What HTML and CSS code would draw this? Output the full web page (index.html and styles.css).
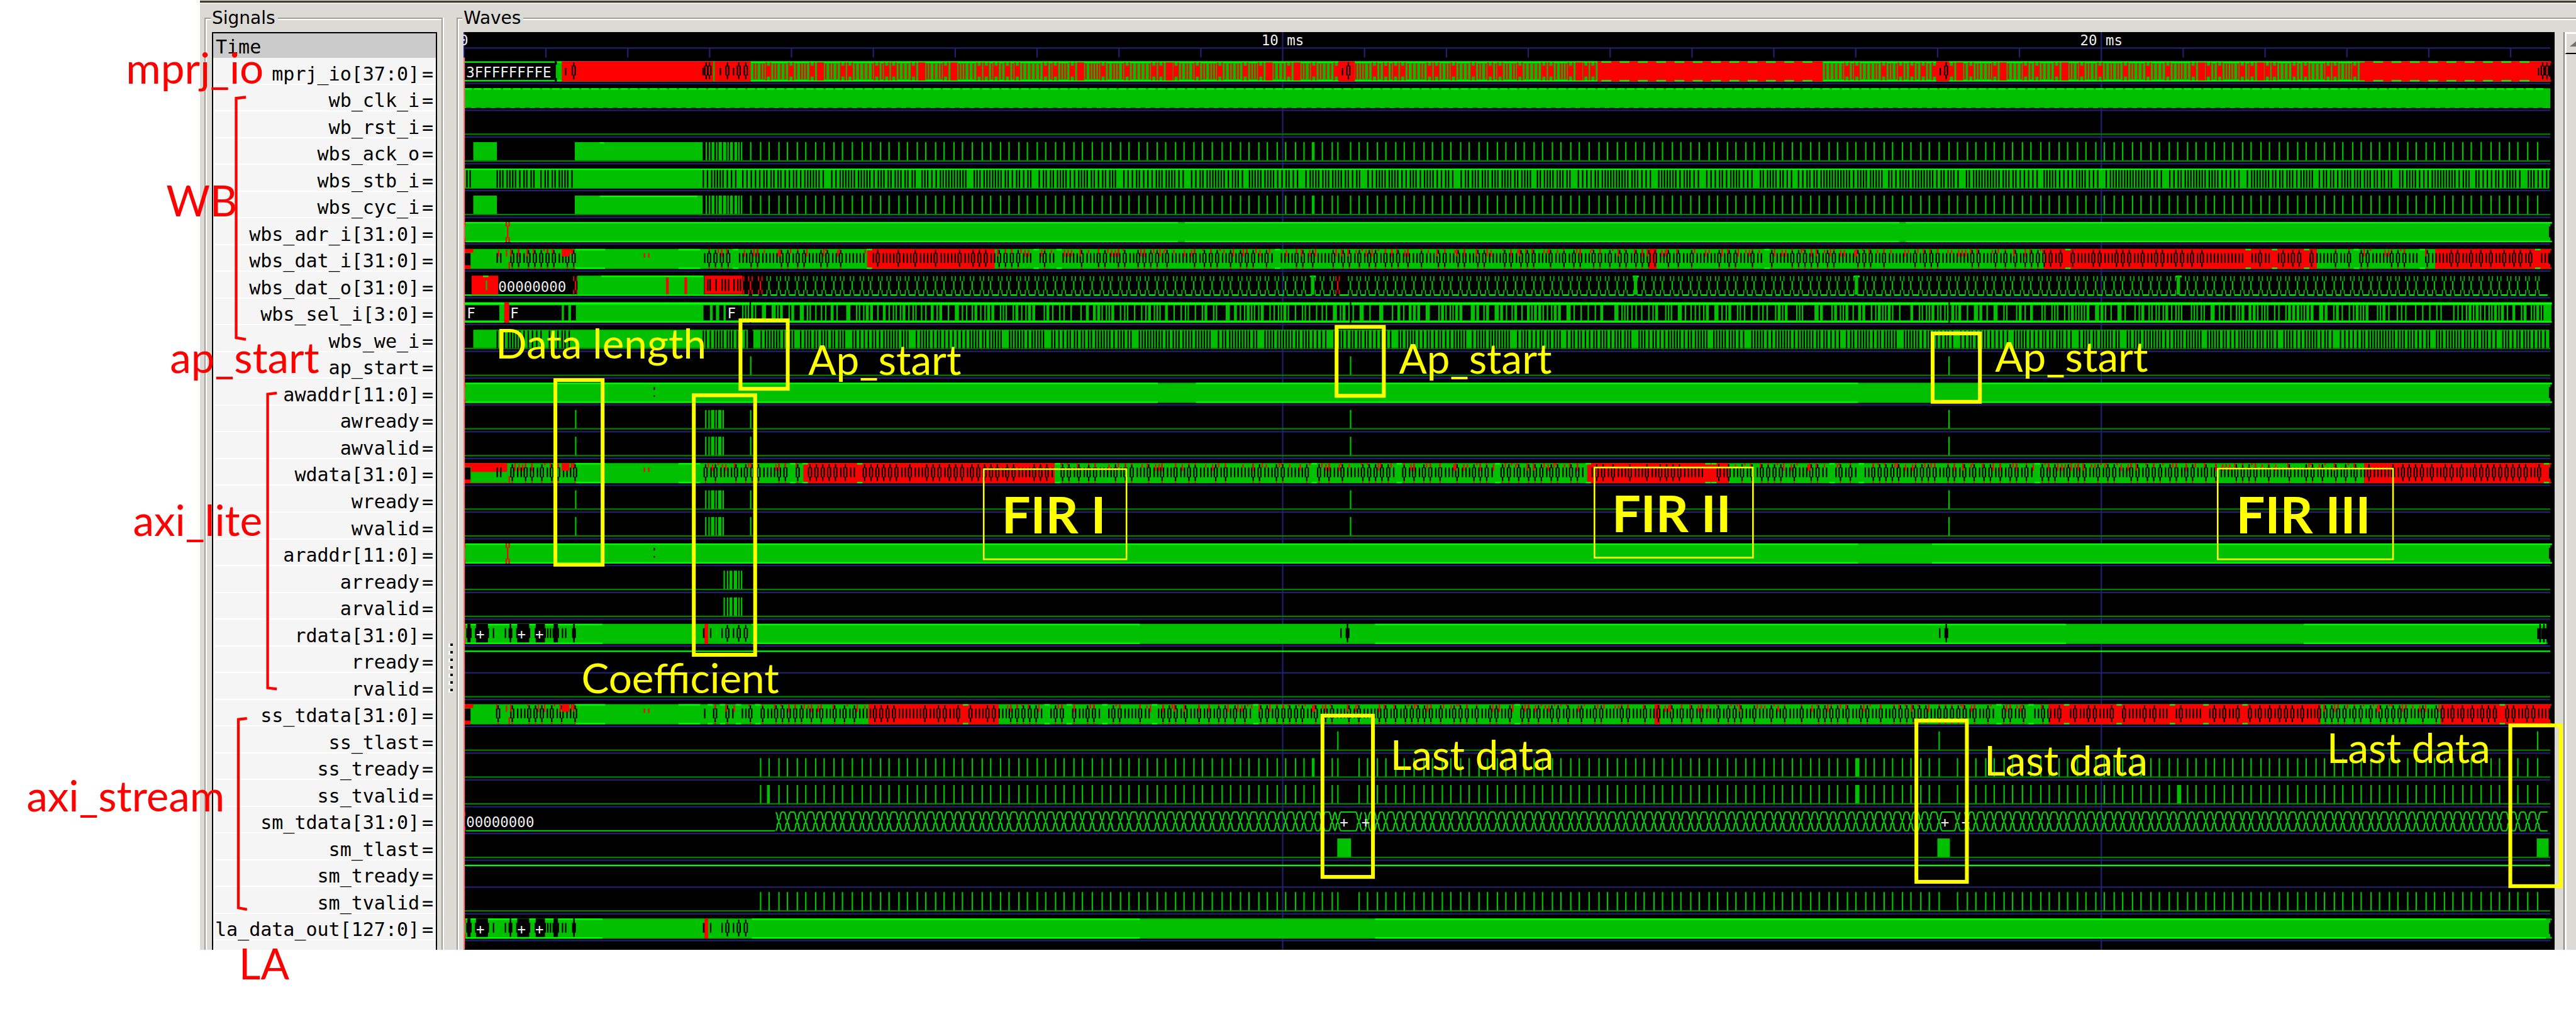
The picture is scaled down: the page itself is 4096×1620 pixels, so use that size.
FILE: index.html
```html
<!DOCTYPE html>
<html lang="en">
<head>
<meta charset="utf-8">
<title>FIR waveform</title>
<link rel="stylesheet" href="styles.css">
</head>
<body>
<main class="figure">
  <div class="viewer">
    <div class="edge"></div>
    <div class="panes">
      <fieldset class="frame signals">
        <legend>Signals</legend>
        <ul class="list">
          <li class="time">Time</li>
          <li>mprj_io[37:0]<i>=</i></li>
          <li>wb_clk_i<i>=</i></li>
          <li>wb_rst_i<i>=</i></li>
          <li>wbs_ack_o<i>=</i></li>
          <li>wbs_stb_i<i>=</i></li>
          <li>wbs_cyc_i<i>=</i></li>
          <li>wbs_adr_i[31:0]<i>=</i></li>
          <li>wbs_dat_i[31:0]<i>=</i></li>
          <li>wbs_dat_o[31:0]<i>=</i></li>
          <li>wbs_sel_i[3:0]<i>=</i></li>
          <li>wbs_we_i<i>=</i></li>
          <li>ap_start<i>=</i></li>
          <li>awaddr[11:0]<i>=</i></li>
          <li>awready<i>=</i></li>
          <li>awvalid<i>=</i></li>
          <li>wdata[31:0]<i>=</i></li>
          <li>wready<i>=</i></li>
          <li>wvalid<i>=</i></li>
          <li>araddr[11:0]<i>=</i></li>
          <li>arready<i>=</i></li>
          <li>arvalid<i>=</i></li>
          <li>rdata[31:0]<i>=</i></li>
          <li>rready<i>=</i></li>
          <li>rvalid<i>=</i></li>
          <li>ss_tdata[31:0]<i>=</i></li>
          <li>ss_tlast<i>=</i></li>
          <li>ss_tready<i>=</i></li>
          <li>ss_tvalid<i>=</i></li>
          <li>sm_tdata[31:0]<i>=</i></li>
          <li>sm_tlast<i>=</i></li>
          <li>sm_tready<i>=</i></li>
          <li>sm_tvalid<i>=</i></li>
          <li>la_data_out[127:0]<i>=</i></li>
        </ul>
      </fieldset>
      <div class="handle"><b></b><b></b><b></b><b></b><b></b><b></b><b></b></div>
      <fieldset class="frame waves">
        <legend>Waves</legend>
        <svg class="plot" viewBox="854 60 3852 1690" role="img" aria-label="Waveforms">
          <g id="grid"></g>
          <g id="traces"></g>
          <g class="value">
            <text x="855" y="84" text-anchor="middle">0</text>
            <text x="2363" y="84" text-anchor="middle">10 ms</text>
            <text x="3871" y="84" text-anchor="middle">20 ms</text>
            <text x="859" y="143">3FFFFFFFFE</text>
            <text x="918" y="538">00000000</text>
            <text x="860" y="587">F</text>
            <text x="940" y="587">F</text>
            <text x="1340" y="587">F</text>
            <text x="859" y="1524">00000000</text>
            <text x="885" y="1178" text-anchor="middle">+</text>
            <text x="961" y="1178" text-anchor="middle">+</text>
            <text x="994" y="1178" text-anchor="middle">+</text>
            <text x="2476" y="1524" text-anchor="middle">+</text>
            <text x="2516" y="1524" text-anchor="middle">+</text>
            <text x="3583" y="1524" text-anchor="middle">+</text>
            <text x="3621" y="1524" text-anchor="middle">+</text>
            <text x="885" y="1721" text-anchor="middle">+</text>
            <text x="961" y="1721" text-anchor="middle">+</text>
            <text x="994" y="1721" text-anchor="middle">+</text>
          </g>
        </svg>
        <div class="scroll">
          <button class="up" type="button" aria-label="Scroll up"><svg viewBox="0 0 24 10"><path d="M0 10L12 0L24 10z"/></svg></button>
        </div>
      </fieldset>
    </div>
  </div>
  <svg class="notes" viewBox="0 0 4745 1877">
    <g class="brace">
      <path d="M453 179L435 181V622L453 625"/>
      <path d="M510 724L493 726V1267L510 1269"/>
      <path d="M455 1323L439 1325V1672L455 1675"/>
    </g>
    <g class="group">
      <text x="232" y="154">mprj_io</text>
      <text x="306" y="398">WB</text>
      <text x="313" y="687">ap_start</text>
      <text x="245" y="987">axi_lite</text>
      <text x="49" y="1494">axi_stream</text>
      <text x="440" y="1804">LA</text>
    </g>
    <g class="mark">
      <rect x="1023" y="700" width="87" height="340"/>
      <rect x="1278" y="728" width="113" height="478"/>
      <rect x="1364" y="590" width="87" height="126"/>
      <rect x="2462" y="602" width="87" height="127"/>
      <rect x="3560" y="614" width="87" height="126"/>
      <rect x="2436" y="1318" width="93" height="297"/>
      <rect x="3530" y="1327" width="93" height="297"/>
      <rect x="4624" y="1336" width="93" height="296"/>
    </g>
    <g class="box">
      <rect x="1812" y="864" width="263" height="166"/>
      <rect x="2937" y="861" width="292" height="166"/>
      <rect x="4085" y="863" width="323" height="167"/>
    </g>
    <g class="note">
      <text x="913" y="660">Data length</text>
      <text x="1489" y="691">Ap_start</text>
      <text x="2577" y="688">Ap_start</text>
      <text x="3675" y="685">Ap_start</text>
      <text x="1071" y="1277">Coefficient</text>
      <text x="2561" y="1418">Last data</text>
      <text x="3655" y="1428">Last data</text>
      <text x="4286" y="1405">Last data</text>
    </g>
    <g class="fir">
      <text x="1845" y="982">FIR I</text>
      <text x="2969" y="980">FIR II</text>
      <text x="4119" y="982">FIR III</text>
    </g>
  </svg>
</main>
<script src="waves.js"></script>
</body>
</html>
```
FILE: styles.css
```css
* { box-sizing: border-box; }

body {
  margin: 0;
  background: #fff;
  color: #000;
  overflow-x: hidden;
}

.figure {
  position: relative;
  padding: 0 0 109px 318px;
}

.viewer {
  background: #dcdad5;
  overflow: hidden;
}

.edge {
  height: 6px;
  margin-bottom: 6px;
  background: #151713;
  border-top: 2px solid #a5a295;
  border-bottom: 2px solid #edebe6;
}

.panes { display: flex; padding-left: 7px; }

.frame {
  display: flex;
  min-width: 0;
  margin: 0;
  padding: 5px 7px 0 10px;
  border: 2px solid #a39f96;
  border-bottom: 0;
  box-shadow: inset 2px 2px #fff, 2px 0 #fff;
}

.frame legend {
  padding: 0 4px 0 2px;
  margin-left: -2px;
  background: #dcdad5;
  font: 28px/34px "DejaVu Sans", sans-serif;
}

.signals { flex: none; width: 379px; }
.waves { flex: 1; padding: 5px 0 0 9px; border-right: 0; }

.list {
  flex: 1;
  display: grid;
  grid-template-rows: 136fr repeat(33, 148fr) 50fr;
  margin: 0;
  padding: 0;
  list-style: none;
  border: 2px solid #000;
  border-bottom: 0;
  background: #f5f5f5;
  font: 30px/30px "DejaVu Sans Mono", monospace;
}

.list li {
  display: flex;
  align-items: flex-end;
  justify-content: flex-end;
  min-height: 0;
  padding-right: 4px;
  border-bottom: 2px solid #fff;
  border-left: 3px solid #fafafa;
  white-space: nowrap;
}

.list i { font-style: normal; margin-left: 4px; }

.list .time {
  justify-content: flex-start;
  padding-left: 1px;
  border-color: #cbcbcb;
  background: #cbcbcb;
}

.handle {
  flex: none;
  width: 22px;
  padding: 1011px 0 0 9px;
  display: flex;
  flex-direction: column;
  gap: 6px;
}

.handle b {
  width: 7px;
  height: 6px;
  background: #111;
  border-left: 3px solid #fff;
  border-bottom: 2px solid #fff;
}

.plot {
  flex: 1;
  min-width: 0;
  height: auto;
  display: block;
  background: #000;
}

.value {
  fill: #f0f0f0;
  font: 26px "DejaVu Sans Mono", monospace;
}

.scroll {
  flex: none;
  width: 20px;
  margin-left: 14px;
  border-left: 2px solid #88857d;
  box-shadow: inset 3px 0 #fff;
}

.up {
  display: block;
  width: 18px;
  height: 35px;
  padding: 0 0 0 5px;
  overflow: hidden;
  background: #dcdad5;
  border: solid;
  border-width: 3px 0 2px 3px;
  border-color: #fff #fff #000 #fff;
}

.up svg { display: block; width: 24px; height: 10px; fill: #75736e; }

.notes {
  position: absolute;
  left: 0;
  top: 0;
  width: 100%;
  pointer-events: none;
  font-family: Lato, sans-serif;
}

.brace { fill: none; stroke: #f00; stroke-width: 5; }
.group { fill: #f00; font-size: 78px; }
.mark { fill: none; stroke: #ff0; stroke-width: 7; }
.box { fill: none; stroke: #ff0; stroke-width: 3; }
.note { fill: #ff0; font-size: 76px; }
.fir { fill: #ff0; font-size: 94px; font-weight: 700; }
```
FILE: waves.js
```js
(() => {
const NS = "http://www.w3.org/2000/svg";
const COLORS = { g: "#00c000", hi: "#00ff00", lo: "#008000", k: "#000", r: "#ff0000", b: "#20206e", p: "#ff7070" };
const X0 = 855, X1 = 4698, PX = 2.6;
const bottom = k => 105.33 + 49.333 * k;
const snap = x => X0 + Math.round((x - X0) / PX) * PX;

let seed = 7;
const rnd = () => (seed = (seed * 16807) % 2147483647) / 2147483647;
const pick = a => a[Math.floor(rnd() * a.length)];

// Rectangles are gathered by layer, a colour key with an optional digit.
let layers = new Map();
const rect = (key, x, y, w, h) => {
  const n = v => Math.round(v * 10) / 10;
  layers.set(key, (layers.get(key) || "") + `M${n(x)} ${n(y)}h${n(w)}v${n(h)}h${n(-w)}z`);
};
function flush(id) {
  const g = document.getElementById(id);
  const order = [...layers].sort((a, b) => (+a[0].slice(-1) || 0) - (+b[0].slice(-1) || 0));
  for (const [key, d] of order) {
    const p = document.createElementNS(NS, "path");
    p.setAttribute("d", d);
    p.setAttribute("fill", COLORS[key.replace(/\d/, "")]);
    g.append(p);
  }
  layers = new Map();
}
const top = k => bottom(k) - 40.7;
const H = 37;

// Ruler and grid
for (let i = 0; i <= 25; i++) {
  const x = X0 + 150.8 * i;
  if (i % 10 === 0) rect("b", x - 1.3, 60, PX, 1690);
  else rect("b", x - 1.3, 89, PX, 18);
}
rect("b", X0, 88, X1 - X0, PX);
for (let k = 1; k <= 33; k++) rect("b", X0, bottom(k) - 1.3, X1 - X0, PX);
flush("grid");

// Pulse positions of the three filter runs
const run = (a, b) => Array.from({ length: 63 }, (_, i) => a + (b - a) * i / 62);
const pulses = [...run(1400, 2454), 2464.5, ...run(2503, 3555), 3570.7, ...run(3606, 4655), 4674];
const starts = [1382, 2487.7, 3590.5];

const low = k => rect("lo", X0, bottom(k) - 6.6, X1 - X0, PX);
const high = k => rect("hi", X0, bottom(k) - 41, X1 - X0, PX);
const pulse = (k, x, w = PX) => rect("g", snap(x) - 1, bottom(k) - 40, w, 34);
const solid = (k, a, b, key = "g") => rect(key, a, top(k), b - a, H);
function rails(k, a, b, gaps = []) {
  let x = a;
  for (const [s, e] of [...gaps, [b, b]]) {
    rect("hi3", x, top(k), s - x, PX);
    rect("hi3", x, top(k) + H - PX, s - x, PX);
    x = e;
  }
}
const mid = (k, x, key = "k4") => rect(key, x, top(k) + 8, PX, 18);
function oval(k, x, key = "k4") {
  rect(key, x - 3.9, top(k) + 8, PX, 18);
  rect(key, x + 1.3, top(k) + 8, PX, 18);
  rect(key, x - 1.3, top(k) + 2, PX, 7);
  rect(key, x - 1.3, top(k) + 25, PX, 8);
}
const notch = k => {
  rect("k7", 4695.5, top(k) + 8, 8, 20);
  rect("k7", 4698, top(k) + 3, 6, 31);
};

// Bands of a bus whose value never holds still
function busy(k, reds) {
  solid(k, X0, 4700);
  rails(k, 1060, 1115, []); rails(k, 1250, 1290, []);
  for (const [a, b] of reds) solid(k, a, b, "r1");
  rect("k4", X0, top(k) + 8, 12, 24);
  rect("r5", X0, top(k), 17, 7); rect("r5", X0, top(k) + 30, 12, 7);
  const spans = [[915, 924], [941, 1060], [1296, 4696]];
  for (const [a, b] of spans) {
    let x = snap(a);
    while (x < b) {
      const red = reds.some(([s, e]) => x >= s && x < e);
      const t = rnd();
      if (t < .45) {
        oval(k, x + 3);
        if (!red) {
          rect("r5", x + 1.7, top(k) + H - 3, PX, 3);
          rect("r5", x + 1.7 + pick([-2.6, 0, 5.2]), top(k), PX, pick([4, 8, 14]));
        }
        x += 11.7;
      } else if (t < .96) {
        mid(k, x);
        if (!red && rnd() < .35) rect("r5", x + 2.6, top(k) + 2, PX, pick([6, 12]));
        x += 6.5;
      } else {
        rect("hi3", x, top(k), 10, PX); rect("hi3", x, top(k) + H - PX, 10, PX);
        x += 11;
      }
    }
  }
  rect("r5", 1035, top(k), 14, 14); rect("r5", 1052, top(k), PX, 10);
  rect("r5", 1186, top(k) + 8, PX, 8); rect("r5", 1194, top(k) + 8, PX, 8);
  rect("r5", 932, top(k) + 2, PX, 12); rect("r5", 937, top(k) + 24, PX, 12);
  notch(k);
}

// Black stripes over a green band
function stripes(k, a, b) {
  let x = snap(a), wide = 40 + rnd() * 90;
  while (x < b) {
    rect("k2", x, top(k) + 2.4, PX, 33);
    const w = pick([2.6, 2.6, 2.6, 5.2, 5.2]);
    x += PX + w; wide -= PX + w;
    if (wide < 0) { x += 7.8; wide = 60 + rnd() * 110; }
  }
}

// 1: mprj_io
{
  const k = 1, t = top(k);
  solid(k, 1024, X1);
  rails(k, X0, X1);
  rect("g4", 1026, t + 6, PX, 25);
  rect("k5", 1022, t, 4, 6); rect("k5", 1022, t + 31, 4, 6);
  for (const [a, b] of [[1035, 1383], [2466, 2496], [2943, 3358], [3567, 3590], [4356, 4700]]) rect("r4", a, t, b - a, H);
  let x = snap(1388), block = 4;
  while (x < 4352) {
    const solidRed = (x > 2460 && x < 2496) || (x > 2938 && x < 3358) || (x > 3562 && x < 3590);
    if (!solidRed) {
      if (block-- <= 0) {
        rect("r4", x, t + 8, 9, 20);
        rect("r4", x - 1, t + 2, PX, 33); rect("r4", x + 7, t + 2, PX, 33);
        x += 13; block = pick([0, 1, 3, 4, 5]);
        if (rnd() < .12) { rect("r4", x, t + 2, 13, 33); x += 15; }
        continue;
      }
      rect("r4", x, t + 4, PX, 29);
    }
    x += pick([5.2, 7.8]);
  }
  for (const [a, b] of [[2950, 3340], [4372, 4670]])
    for (let d = a; d < b; d += 33.7) { rect("hi6", d, t, 18, PX); rect("hi6", d, t + H - PX, 18, PX); }
  for (const m of [1041, 1294, 1326, 1350, 2472, 3573, 4675]) rect("k6", m, t + 12, PX, 14);
  for (const m of [1057, 1301, 1307, 1340, 1361, 1374, 2484, 3585, 4684, 4692]) oval(k, m, "k6");
  rect("g6", 1314, t, PX, H);
  notch(k);
  flush("traces");
}

// 2: clock
solid(2, X0, X1);
for (let x = X0; x < X1 - 14; x += 18) rect("hi", x, top(2), 14, PX);
for (let x = X0 + 4; x < X1 - 10; x += 18) rect("lo", x, top(2) + H - 2, 9, 2);
low(3);

// 4, 6: acknowledge and cycle
for (const k of [4, 6]) {
  low(k);
  rect("g", 872, bottom(k) - 40, 43.5, 34);
  rect("g", 1059, bottom(k) - 40, 235.5, 34);
  rect("hi2", 1105, bottom(k) - 40, k === 6 ? 180 : 8, PX);
  for (const [x, w] of [[1300, 2.6], [1306, 2.6], [1311, 5.2], [1319, 2.6], [1324, 6], [1332, 6], [1340, 2.6], [1345, 5.2], [1353, 5.2], [1360, 2.6], [1365, 2.6]]) rect("g", x, bottom(k) - 40, w, 34);
  for (const x of [...starts, ...pulses]) pulse(k, x);
  pulse(k, 2417, 5.2);
}
flush("traces");

// 5, 11: strobe and write enable
{
  solid(5, X0, 4696);
  rect("k2", 859, top(5) + 2, PX, 33); rect("k2", 865, top(5) + 2, PX, 33);
  stripes(5, 916, 1058); stripes(5, 1295, 4694);
  rect("hi3", X0, top(5), X1 - X0, PX);
  rect("g", 872, top(11) + 1, 4696 - 872, 34);
  low(11);
  stripes(11, 916, 1054); stripes(11, 1295, 4694);
  rect("k2", 1378, top(11), 8, 35);
  flush("traces");
}

// 7, 13, 19: addresses
for (const [k, gap] of [[7, [[2170, 2183], [3499, 3511]]], [13, [[2133, 2203], [3423, 3648]]], [19, [[3423, 3559]]]]) {
  solid(k, X0, 4701);
  rails(k, X0, 4701, gap);
  rect("r4", X0, top(k), PX, 8); rect("r4", X0, top(k) + 29, PX, 8);
  if (k !== 13) {
    rect("r4", 934, top(k) + 7, PX, 22);
    for (const x of [931.5, 936.7]) { rect("r4", x, top(k), PX, 8); rect("r4", x, top(k) + 28, PX, 9); }
  }
  if (k !== 7) { rect("k4", 1204, top(k) + 8, PX, 5); rect("k4", 1204, top(k) + 23, PX, 3); }
  notch(k);
}
flush("traces");

busy(8, [[1597.5, 1832.5], [3038, 3052], [3766, 4268], [4486, 4700]]);
flush("traces");
busy(16, [[868, 934], [1480, 1943], [2924, 3185], [4355, 4700]]);
rect("g2", 868, top(16) + 16, 66, 20);
flush("traces");
busy(25, [[1600, 1840], [3048, 3058], [3775, 4275], [4496, 4700]]);
flush("traces");

// 9: wbs_dat_o
{
  const k = 9, t = top(k);
  const cross = (x, key, w = PX) => {
    x = snap(x);
    rect(key, x - 1.3, t + 10, w, 17);
    for (const s of [-1, 1]) {
      rect(key, x - 1.3 + s * 3.2, t + 1, 2, 9);
      rect(key, x - 1.3 + s * 3.2, t + 26, 2, 9);
    }
  };
  rect("hi", X0, t + H - PX, 4693 - X0, PX);
  rect("r", 869, t, 49, H - 2); rect("g3", 895, t + 9, PX, 18); rect("hi3", 890, t, 10, PX);
  cross(1060, "r");
  rect("g", 1064, t, 233, H - 2); rect("hi3", 1108, t, 188, PX);
  rect("r2", 1227, t + 3, 5, 31); rect("r2", 1261, t + 3, 5, 31);
  rect("r", 1298, t, 70, H - 3);
  for (const x of [1303, 1307, 1318, 1329, 1335, 1341, 1351, 1358, 1363]) rect("k3", x, t + 6, PX, 22);
  for (const x of pulses) cross(x, x < 1401 || Math.abs(x - 2464.5) < 1 ? "r" : "g");
  cross(1366, "r"); cross(1382, "r");
  cross(2487.7, "g"); cross(3590.5, "g");
  for (const x of pulses.concat(starts)) rect("k3", snap(x) - 3, t + H - 3, 6, 3);
  for (const x of [2418, 3013, 3420, 4013]) { rect("hi4", x - 5, t, 11, 3); rect("g4", x - 3, t, 6, H - 2); }
  flush("traces");
}

// 10: byte select
{
  const k = 10, t = top(k);
  const cell = (a, w) => rect("k1", a, t + 5, w, 28);
  solid(k, X0, 4700);
  rect("hi3", X0, t, 4701 - X0, 4); rect("hi3", X0, t + H - PX, 4701 - X0, PX);
  cell(857, 63); cell(938, 97); cell(1039, 8); cell(1052, 9);
  rect("r4", 929, t, 9, H);
  cell(1296, 12); cell(1313, 6); cell(1325, 8); cell(1337, 30);
  let x = snap(1370);
  while (x < 4690) {
    const r = rnd();
    if (r < .16) { cell(x, 10.4); x += 13; if (rnd() < .4) x += 5; }
    else { cell(x, pick([2.6, 5.2])); x += pick([5.2, 7.8]); }
  }
  for (const s of starts) rect("k4", s - 1, t, PX, H);
  flush("traces");
}

for (const k of [12, 14, 15, 17, 18, 20, 21, 24, 26, 27, 28, 30, 32]) low(k);
for (const x of starts) pulse(12, x);
for (const k of [14, 15, 17, 18]) {
  pulse(k, 1060);
  for (const x of starts) pulse(k, x);
  for (const [x, w] of [[1299, 2.6], [1305, 2.6], [1310, 6], [1318, 2.6], [1323, 6], [1331, 2.6]]) rect("g", x, bottom(k) - 40, w, 34);
}
for (const k of [20, 21])
  for (const [x, w] of [[1333, 2.6], [1339, 2.6], [1344, 5.2], [1352, 6], [1360, 2.6], [1365, 2.6]]) rect("g", x, bottom(k) - 40, w, 34);
high(23); high(31);
for (const k of [27, 28, 32]) for (const x of pulses) pulse(k, x);
pulse(27, 2418, 5.2); pulse(28, 1415, 5.2); pulse(27, 3420, 5.2); pulse(28, 3420, 5.2); pulse(28, 4013, 5.2);
for (const x of [2464.5, 3570.7, 4674]) pulse(26, x);
rect("g", 2463.5, bottom(30) - 40, 25.5, 34);
rect("g", 3569, bottom(30) - 40, 23, 34);
rect("g", 4673, bottom(30) - 40, 22, 34);
flush("traces");

// 22, 33: read data and logic analyser
for (const k of [22, 33]) {
  const t = top(k);
  solid(k, X0, k === 22 ? 4693 : 4701);
  rails(k, X0, 4690, k === 22 ? [[1110, 1385], [2100, 2533], [3806, 4244]] : [[1110, 1385], [2100, 2533]]);
  for (const [x, w] of [[859, 10], [875, 26], [937, 7], [951, 26], [985, 21], [1018, 12], [1054, 7]]) {
    rect("k4", x, t + 8, w, 18); rect("k4", x + 2, t, w - 4, 34);
  }
  for (const x of [908, 930, 1008, 1013, 1035, 1041]) rect("k4", x, t + 8, PX, 18);
  rect("r4", X0, t, PX, 9); rect("r4", X0, t + 28, PX, 9);
  rect("k4", 1295, t + 8, 4, 18); rect("r4", 1298, t, 6.5, H);
  for (const x of [1308, 1329, 1350]) mid(k, x, "k4");
  for (const x of [1340, 1361, 1374]) oval(k, x, "k4");
  if (k === 22) {
    for (const x of [2469, 3572]) { mid(k, x, "k4"); rect("k4", x + 10, t + 8, 7, 18); rect("k4", x + 12, t, PX, 34); }
    for (const x of [4674, 4681, 4687]) { rect("k4", x, t + 8, 4, 20); rect("k4", x + 4, t, PX, 34); }
  } else notch(k);
}
flush("traces");

// 29: sm_tdata, hexagon cells between the pulses
{
  const k = 29, t = top(k) + 1.3, b = t + H - PX;
  rect("r", X0, t, PX, 8); rect("r", X0, b - 8, PX, 8);
  let d = `M858 ${b}H1428`;
  const edge = x => {
    for (const s of [-1, 1])
      d += `M${x + s * 5} ${t}L${x + s * 2.6} ${t + 7}V${t + 12}L${x} ${t + 15}V${b - 15}L${x + s * 2.6} ${b - 12}V${b - 7}L${x + s * 5} ${b}`;
  };
  const xs = pulses.filter(x => x > 1425).map(snap);
  xs.forEach((x, i) => {
    edge(x);
    const next = xs[i + 1] || 4698;
    const single = x > 2500 && x < 2510 || x > 3603 && x < 3610;
    if (next - x > 8) {
      if (!single) d += `M${x + 5} ${t}H${next - 5}`;
      d += `M${x + 5} ${b}H${next - 5}`;
    }
  });
  const p = document.createElementNS(NS, "path");
  p.setAttribute("d", d);
  p.setAttribute("fill", "none");
  p.setAttribute("stroke", "#00d800");
  p.setAttribute("stroke-width", "2.4");
  document.getElementById("traces").append(p);
}

// Cursor at time zero
rect("b", 854, 60, 2, 47);
rect("p", 854, 107, 2.6, 1643);
flush("traces");
})();
```
